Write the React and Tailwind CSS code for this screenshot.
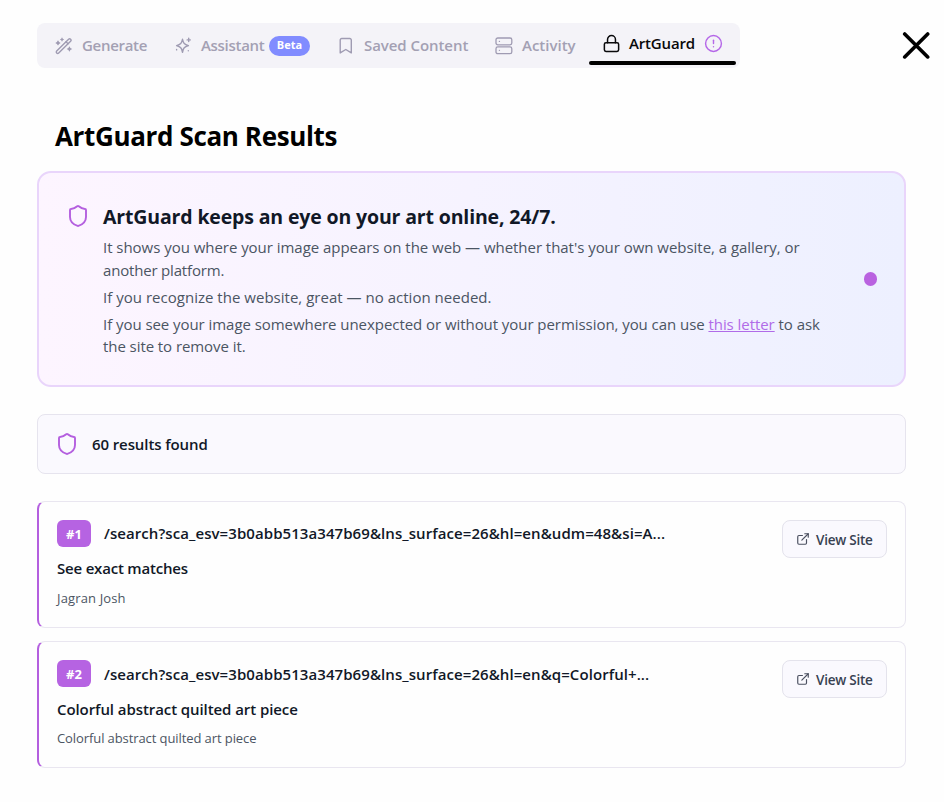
import React from "react";
import { Lock, Shield, ExternalLink, CircleAlert } from "lucide-react";

function WandIcon() {
  return (
    <svg width="18" height="18" viewBox="0 0 18 18" fill="none" stroke="#9f9bb2" strokeWidth="1.4" strokeLinejoin="round" strokeLinecap="round">
      <path d="M1.700 14.100 13.600 2.200a1.400 1.400 0 0 1 2 2L3.700 16.100a1.400 1.400 0 0 1-2-2Z" />
      <path d="m11 4.800 2 2" />
      <path d="M3 3.200 4.100 4.900l1.600 1-1.600 1L3 8.600 1.900 6.900.3 5.900l1.600-1Z" fill="#9f9bb2" stroke="none" />
      <path d="m7 .3.8 1.400 1.400.8-1.400.8L7 4.700l-.8-1.400-1.400-.8 1.400-.8Z" fill="#9f9bb2" stroke="none" />
      <path d="m14.400 9.200 1 1.800 1.800 1-1.800 1-1 1.800-1-1.800-1.800-1 1.800-1Z" fill="#9f9bb2" stroke="none" />
    </svg>
  );
}

function SparklesIcon() {
  return (
    <svg width="18" height="18" viewBox="0 0 18 18" fill="none" stroke="#9f9bb2" strokeWidth="1.400" strokeLinejoin="round" strokeLinecap="round">
      <path d="M8.500 2.300c.9 3.900 1.800 5.100 5.900 6.400-4.100 1.200-5 2.300-5.900 6.600-.9-4.300-1.800-5.400-5.900-6.600 4.100-1.300 5-2.500 5.900-6.400Z" />
      <path d="M14.700 1.300v3.200M13.100 2.900h3.200M2.600 12.500v.4M14.300 13.700v.1" />
    </svg>
  );
}

function BookmarkIcon() {
  return (
    <svg width="14" height="18" viewBox="0 0 14 18" fill="none" stroke="#9f9bb2" strokeWidth="1.400" strokeLinejoin="round">
      <path d="M1.200 15.900V3a1.500 1.500 0 0 1 1.500-1.500h8.100A1.500 1.500 0 0 1 12.300 3v12.900l-5.500-3.400Z" />
    </svg>
  );
}

function ServerIcon() {
  return (
    <svg width="18" height="18" viewBox="0 0 18 18" fill="none" stroke="#9f9bb2" strokeWidth="1.300" strokeLinecap="round">
      <rect x="1" y="1" width="15.800" height="6.800" rx="1.800" />
      <rect x="1" y="9.900" width="15.800" height="6.800" rx="1.800" />
      <path d="M4.400 4.400h.1M4.400 13.300h.1" />
    </svg>
  );
}

const results = [
  {
    rank: "#1",
    url: "/search?sca_esv=3b0abb513a347b69&lns_surface=26&hl=en&udm=48&si=A...",
    title: "See exact matches",
    source: "Jagran Josh",
    urlClass: "mt-[-2px] tracking-[0.07px]",
    titleClass: "mt-[10px] tracking-[-0.2px]",
    sourceClass: "mt-[9px] tracking-[0.14px]",
  },
  {
    rank: "#2",
    url: "/search?sca_esv=3b0abb513a347b69&lns_surface=26&hl=en&q=Colorful+...",
    title: "Colorful abstract quilted art piece",
    source: "Colorful abstract quilted art piece",
    urlClass: "tracking-[0.07px]",
    titleClass: "mt-[11px] tracking-[-0.08px]",
    sourceClass: "mt-[8px] tracking-[-0.09px]",
  },
];

function ResultCard({ item }) {
  return (
    <article className="flex h-[127px] items-start justify-between rounded-[8px] border border-l-2 border-[#e9e6f0] border-l-[#b45fdf] bg-[#fefefe] pl-[18px] pr-[18px] pt-[18px]">
      <div className="flex flex-col">
        <div className="flex h-[27px] items-center">
          <span className="flex h-[27px] w-[34px] items-center justify-center rounded-[6px] bg-[#b663e2] pt-[2px] text-[13px] font-bold text-white">{item.rank}</span>
          <span className={`ml-[13px] whitespace-nowrap text-[15px] font-semibold leading-[20px] text-[#111827] ${item.urlClass}`}>{item.url}</span>
        </div>
        <h3 className={`whitespace-nowrap text-[15px] font-semibold leading-[22px] text-[#111827] ${item.titleClass}`}>{item.title}</h3>
        <p className={`whitespace-nowrap text-[13px] leading-[20px] text-[#4b5563] ${item.sourceClass}`}>{item.source}</p>
      </div>
      <button className="flex h-[38px] w-[105px] items-center rounded-[8px] border border-[#e4e3ec] bg-[#faf9fe] pl-[13px]">
        <ExternalLink size={14} strokeWidth={2} color="#4b5060" />
        <span className="ml-[6px] mt-[2px] whitespace-nowrap text-[13.500px] font-semibold leading-[20px] tracking-[-0.25px] text-[#374151]">View Site</span>
      </button>
    </article>
  );
}

export default function App() {
  return (
    <div className="h-[802px] w-[944px] overflow-hidden bg-[#fefefe] pl-[37px] font-['Open_Sans','Noto_Sans',sans-serif]">
      <header className="flex items-start pt-[23px]">
        <nav className="flex h-[45px] w-[703px] items-center rounded-[8px] bg-[#f4f3f8] text-[15px] font-semibold text-[#a3a0b3]">
          <div className="flex w-[137px] items-center pl-[18px]">
            <WandIcon />
            <span className="ml-[9px] tracking-[-0.3px]">Generate</span>
          </div>
          <div className="flex w-[165px] items-center">
            <SparklesIcon />
            <span className="ml-[9px] w-[68px] whitespace-nowrap tracking-[-0.3px]">Assistant</span>
            <span className="flex h-[20px] w-[41px] items-center justify-center rounded-full bg-[#818cff] text-[11px] font-bold text-white">Beta</span>
          </div>
          <div className="flex w-[156px] items-center">
            <BookmarkIcon />
            <span className="ml-[11px] whitespace-nowrap tracking-[-0.06px]">Saved Content</span>
          </div>
          <div className="flex w-[94px] items-center">
            <ServerIcon />
            <span className="ml-[9px] tracking-[0px]">Activity</span>
          </div>
          <div className="mt-[-3px] flex h-[42px] w-[147px] flex-col justify-between text-[#09090b]">
            <div className="flex h-[38px] items-center pl-[13px] pt-[2px]">
              <Lock size={19} strokeWidth={1.9} />
              <span className="ml-[8px] w-[75px] tracking-[-0.15px]">ArtGuard</span>
              <CircleAlert size={19} strokeWidth={1.800} color="#b567e8" />
            </div>
            <div className="h-[4px] rounded-[2px] bg-black" />
          </div>
        </nav>
        <svg className="ml-[162px] mt-[8px]" width="28" height="28" viewBox="0 0 28 28" stroke="#000" strokeWidth="3.600" strokeLinecap="round">
          <path d="m2.700 2.900 23 23M25.700 2.900 2.700 25.900" />
        </svg>
      </header>

      <main className="w-[869px]">
        <h1 className="mt-[50px] h-[53px] whitespace-nowrap pl-[18px] text-[26px] font-bold leading-[36px] tracking-[-0.36px] text-black">ArtGuard Scan Results</h1>

        <section className="flex h-[216px] items-start rounded-[14px] border-2 border-[#e9d5fb] bg-linear-to-r from-[#fdf5ff] via-[#f6f3ff] to-[#edf0ff] pl-[27px] pt-[30px]">
          <Shield className="mt-[0.5px]" size={24} strokeWidth={1.900} color="#b45fdf" />
          <div className="ml-[13px] w-[761px] whitespace-nowrap text-[15px] leading-[22.500px] text-[#4b5563]">
            <h2 className="text-[19.500px] font-bold leading-[28px] tracking-[-0.15px] text-[#111827]">ArtGuard keeps an eye on your art online, 24/7.</h2>
            <p className="mt-[5px]">
              <span className="block tracking-[-0.035px]">It shows you where your image appears on the web — whether that's your own website, a gallery, or</span>
              <span className="block tracking-[-0.18px]">another platform.</span>
            </p>
            <p className="mt-[4.500px] tracking-[0.02px]">If you recognize the website, great — no action needed.</p>
            <p className="mt-[4.500px]">
              <span className="block tracking-[-0.055px]">If you see your image somewhere unexpected or without your permission, you can use <a className="text-[#b06be8] underline">this letter</a> to ask</span>
              <span className="block tracking-[-0.07px]">the site to remove it.</span>
            </p>
          </div>
          <div className="mt-[69px] h-[14px] w-[13px] rounded-full bg-[#b962e0]" />
        </section>

        <section className="mt-[27px] flex h-[60px] items-center rounded-[8px] border border-[#e6e4ee] bg-[#faf9fe] pl-[17px]">
          <Shield size={24} strokeWidth={1.900} color="#b45fdf" />
          <span className="ml-[13px] whitespace-nowrap text-[15px] font-semibold tracking-[-0.1px] text-[#111827]">60 results found</span>
        </section>

        <div className="mt-[27px] flex flex-col gap-[13px]">
          {results.map((item) => (
            <ResultCard key={item.rank} item={item} />
          ))}
        </div>
      </main>
    </div>
  );
}
